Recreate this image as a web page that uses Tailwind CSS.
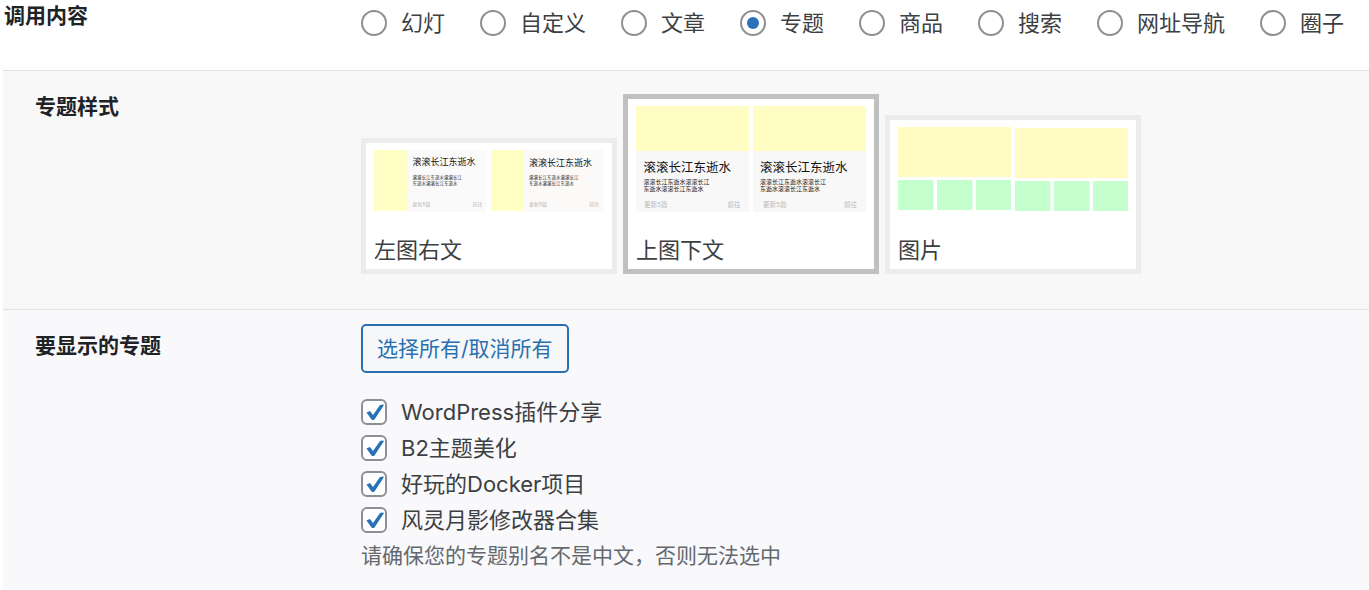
<!DOCTYPE html>
<html lang="zh-CN">
<head>
    <meta charset="UTF-8">
    <meta name="viewport" content="width=device-width, initial-scale=1.0">
    <title>模块设置</title>
    <!-- TailwindCSS -->
    <script src="https://cdn.jsdelivr.net/npm/@tailwindcss/browser@4"></script>
</head>
<body class="bg-white font-[Inter,'Noto_Sans_CJK_SC',sans-serif] text-[#3c4043]">
    <form class="flex min-h-screen flex-col pl-[3px]">
        <!-- 调用内容 -->
        <fieldset class="flex pb-[29px]">
            <legend class="float-left w-[358px] shrink-0 pl-px text-[21px]/8 font-bold text-[#1d2327]">调用内容</legend>
            <div class="flex flex-wrap gap-x-[35px] pt-1 text-[22px]/10 whitespace-nowrap">
                <label class="flex h-[37px] items-center gap-[14px]">
                    <input type="radio" name="content" value="slider" class="size-[26px] shrink-0 appearance-none rounded-full border-2 border-[#8c8f94] bg-white">幻灯
                </label>
                <label class="flex h-[37px] items-center gap-[14px]">
                    <input type="radio" name="content" value="custom" class="size-[26px] shrink-0 appearance-none rounded-full border-2 border-[#8c8f94] bg-white">自定义
                </label>
                <label class="flex h-[37px] items-center gap-[14px]">
                    <input type="radio" name="content" value="post" class="size-[26px] shrink-0 appearance-none rounded-full border-2 border-[#8c8f94] bg-white">文章
                </label>
                <label class="flex h-[37px] items-center gap-[14px]">
                    <input type="radio" name="content" value="collection" checked class="grid size-[26px] shrink-0 appearance-none place-items-center rounded-full border-2 border-[#8c8f94] bg-white before:size-3 before:rounded-full before:bg-[#2a72b8] before:content-['']">专题
                </label>
                <label class="flex h-[37px] items-center gap-[14px]">
                    <input type="radio" name="content" value="shop" class="size-[26px] shrink-0 appearance-none rounded-full border-2 border-[#8c8f94] bg-white">商品
                </label>
                <label class="flex h-[37px] items-center gap-[14px]">
                    <input type="radio" name="content" value="search" class="size-[26px] shrink-0 appearance-none rounded-full border-2 border-[#8c8f94] bg-white">搜索
                </label>
                <label class="flex h-[37px] items-center gap-[14px]">
                    <input type="radio" name="content" value="links" class="size-[26px] shrink-0 appearance-none rounded-full border-2 border-[#8c8f94] bg-white">网址导航
                </label>
                <label class="flex h-[37px] items-center gap-[14px]">
                    <input type="radio" name="content" value="circle" class="size-[26px] shrink-0 appearance-none rounded-full border-2 border-[#8c8f94] bg-white">圈子
                </label>
            </div>
        </fieldset>

        <!-- 专题样式 -->
        <fieldset class="flex border-t border-[#e2e2e3] bg-[#f8f8f8] pt-[23px] pb-[35px] pl-8">
            <legend class="float-left -mt-[3px] w-[326px] shrink-0 text-[21px]/8 font-bold text-[#1d2327]">专题样式</legend>
            <div class="flex items-end gap-[6px] text-[22px]/8">
                <label class="w-64 border-5 border-[#ececec] bg-white px-2 pt-[7px] pb-[3px]">
                    <input type="radio" name="style" value="left" class="sr-only">
                    <svg class="mb-[22px] block w-full" viewBox="0 0 460 124" aria-hidden="true">
                        <path fill="#fafafa" d="M64 0h160v124H64z"/>
                        <path fill="#fcf9f9" d="M298 0h162v124H298z"/>
                        <path fill="#fffec4" d="M0 0h66v122H0zM234 0h66v122h-66z"/>
                        <g fill="#111">
                            <text x="77" y="30" font-size="18">滚滚长江东逝水</text>
                            <text x="310" y="31" font-size="18">滚滚长江东逝水</text>
                        </g>
                        <g fill="#222" font-size="9">
                            <text x="77" y="58">滚滚长江东逝水滚滚长江</text>
                            <text x="77" y="70">东逝水滚滚长江东逝水</text>
                            <text x="310" y="58">滚滚长江东逝水滚滚长江</text>
                            <text x="310" y="70">东逝水滚滚长江东逝水</text>
                        </g>
                        <g fill="#b8b8b8" font-size="10">
                            <text x="77" y="112">更新5篇</text>
                            <text x="197" y="112">前往</text>
                            <text x="310" y="112">更新5篇</text>
                            <text x="430" y="112">前往</text>
                        </g>
                    </svg>
                    左图右文
                </label>
                <label class="w-64 border-5 border-[#c0c0c0] bg-white px-2 pt-[7px] pb-[3px]">
                    <input type="radio" name="style" value="top" checked class="sr-only">
                    <svg class="mb-[22px] block w-full" viewBox="0 0 460 212" aria-hidden="true">
                        <path fill="#f9f8f8" d="M0 90h226v122H0zM234 90h226v122H234z"/>
                        <path fill="#fffdc4" d="M0 0h226v90H0zM234 0h226v90H234z"/>
                        <g fill="#111" font-size="25">
                            <text x="15" y="132">滚滚长江东逝水</text>
                            <text x="248" y="132">滚滚长江东逝水</text>
                        </g>
                        <g fill="#222" font-size="12">
                            <text x="15" y="156">滚滚长江东逝水滚滚长江</text>
                            <text x="15" y="170">东逝水滚滚长江东逝水</text>
                            <text x="248" y="156">滚滚长江东逝水滚滚长江</text>
                            <text x="248" y="170">东逝水滚滚长江东逝水</text>
                        </g>
                        <g fill="#b8b8b8" font-size="13">
                            <text x="16" y="202">更新5篇</text>
                            <text x="183" y="202">前往</text>
                            <text x="254" y="202">更新5篇</text>
                            <text x="416" y="202">前往</text>
                        </g>
                    </svg>
                    上图下文
                </label>
                <label class="w-64 border-5 border-[#ececec] bg-white px-2 pt-[7px] pb-[3px]">
                    <input type="radio" name="style" value="image" class="sr-only">
                    <svg class="mb-[22px] block w-full" viewBox="0 0 460 170" aria-hidden="true">
                        <path fill="#fffbc3" d="M0 0h226v100H0zM234 2h226v100H234z"/>
                        <path fill="#c5ffcd" d="M0 106h71v60H0zM78 106h71v60H78zM156 106h70v60h-70zM234 108h71v60h-71zM312 108h71v60h-71zM390 108h70v60h-70z"/>
                    </svg>
                    图片
                </label>
            </div>
        </fieldset>

        <!-- 要显示的专题 -->
        <fieldset class="flex grow border-t border-[#e2e2e3] bg-[#f9f8fa] pt-[14px] pl-8">
            <legend class="float-left mt-[6px] w-[326px] shrink-0 text-[21px]/8 font-bold text-[#1d2327]">要显示的专题</legend>
            <div class="text-[22px]/9">
                <button type="button" class="mb-[21px] block h-[49px] rounded-[5px] border-2 border-[#2a6fb0] bg-[#f6f7f9] px-[14px] text-[21px] text-[#2a6fb0]">选择所有/取消所有</button>
                <label class="flex h-9 items-center gap-[14px]">
                    <span class="grid shrink-0">
                        <input type="checkbox" checked class="peer col-start-1 row-start-1 size-[26px] appearance-none rounded-md border-2 border-[#8c8f94] bg-white">
                        <svg class="invisible col-start-1 row-start-1 size-[26px] peer-checked:visible" viewBox="0 0 26 26" fill="#2a72b8"><path d="M5.5 13.5l3.5-1.5 3 4L19 6q3-1 4 0L13.500 20.500q-1.500 1-3 0z"/></svg>
                    </span>WordPress插件分享
                </label>
                <label class="flex h-9 items-center gap-[14px]">
                    <span class="grid shrink-0">
                        <input type="checkbox" checked class="peer col-start-1 row-start-1 size-[26px] appearance-none rounded-md border-2 border-[#8c8f94] bg-white">
                        <svg class="invisible col-start-1 row-start-1 size-[26px] peer-checked:visible" viewBox="0 0 26 26" fill="#2a72b8"><path d="M5.500 13.500l3.500-1.500 3 4L19 6q3-1 4 0L13.500 20.500q-1.500 1-3 0z"/></svg>
                    </span>B2主题美化
                </label>
                <label class="flex h-9 items-center gap-[14px]">
                    <span class="grid shrink-0">
                        <input type="checkbox" checked class="peer col-start-1 row-start-1 size-[26px] appearance-none rounded-md border-2 border-[#8c8f94] bg-white">
                        <svg class="invisible col-start-1 row-start-1 size-[26px] peer-checked:visible" viewBox="0 0 26 26" fill="#2a72b8"><path d="M5.500 13.500l3.500-1.500 3 4L19 6q3-1 4 0L13.500 20.500q-1.500 1-3 0z"/></svg>
                    </span>好玩的Docker项目
                </label>
                <label class="flex h-9 items-center gap-[14px]">
                    <span class="grid shrink-0">
                        <input type="checkbox" checked class="peer col-start-1 row-start-1 size-[26px] appearance-none rounded-md border-2 border-[#8c8f94] bg-white">
                        <svg class="invisible col-start-1 row-start-1 size-[26px] peer-checked:visible" viewBox="0 0 26 26" fill="#2a72b8"><path d="M5.500 13.500l3.500-1.500 3 4L19 6q3-1 4 0L13.500 20.500q-1.500 1-3 0z"/></svg>
                    </span>风灵月影修改器合集
                </label>
                <p class="text-[21px]/9 text-[#646970]">请确保您的专题别名不是中文，否则无法选中</p>
            </div>
        </fieldset>
    </form>
</body>
</html>
